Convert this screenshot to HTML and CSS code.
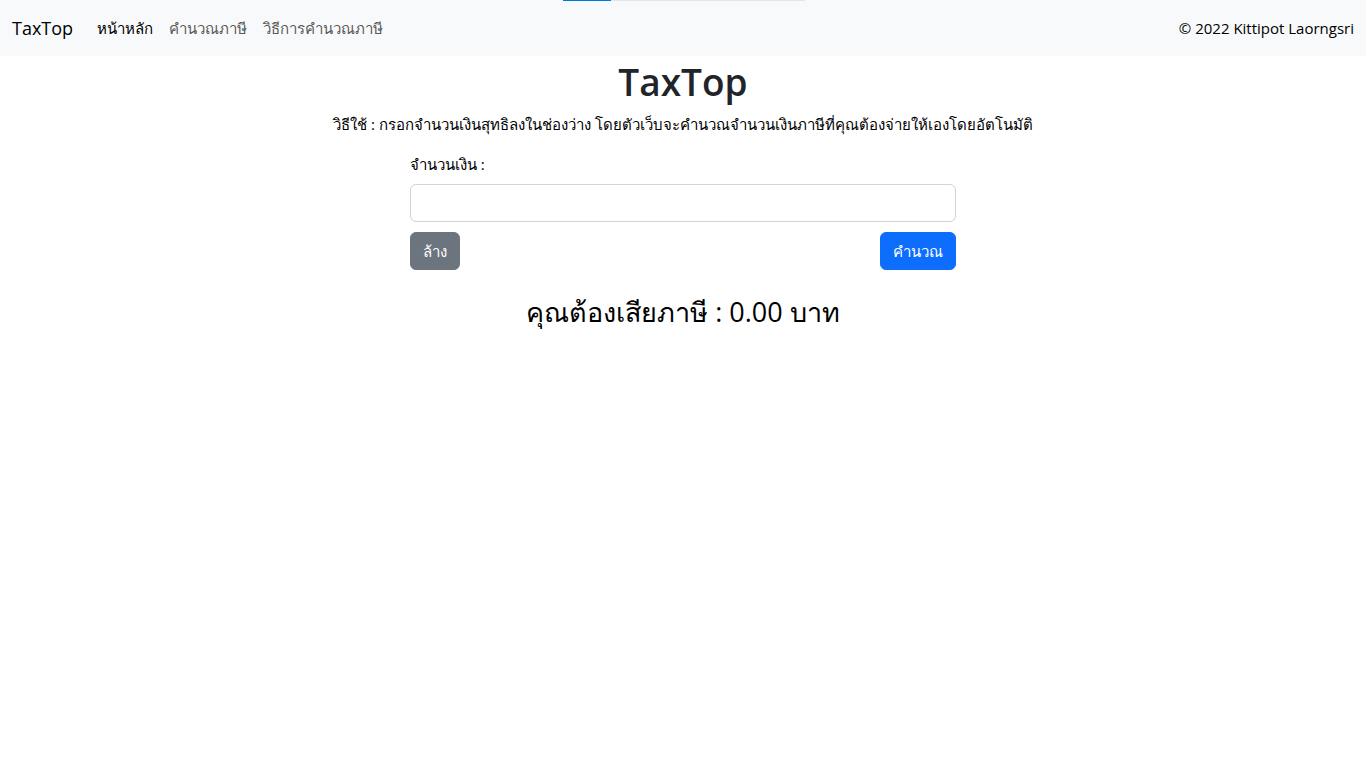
FILE: index.html
```html
<!DOCTYPE html>
<html lang="th">
<head>
<meta charset="utf-8">
<meta name="viewport" content="width=device-width, initial-scale=1">
<title>TaxTop</title>
<link rel="stylesheet" href="styles.css">
</head>
<body>
<div class="progress"><div class="progress-value"></div></div>
<nav class="navbar">
  <a class="brand" href="#">TaxTop</a>
  <ul class="nav-list">
    <li><a class="nav-link active" href="#">หน้าหลัก</a></li>
    <li><a class="nav-link" href="#">คำนวณภาษี</a></li>
    <li><a class="nav-link" href="#">วิธีการคำนวณภาษี</a></li>
  </ul>
  <span class="copyright">© 2022 Kittipot Laorngsri</span>
</nav>
<main class="page">
  <h1 class="title">TaxTop</h1>
  <p class="usage">วิธีใช้ : กรอกจำนวนเงินสุทธิลงในช่องว่าง โดยตัวเว็บจะคำนวณจำนวนเงินภาษีที่คุณต้องจ่ายให้เองโดยอัตโนมัติ</p>
  <form class="tax-form">
    <label class="label" for="amount">จำนวนเงิน :</label>
    <input class="amount" id="amount" type="text">
    <div class="actions">
      <button class="btn btn-secondary" type="reset">ล้าง</button>
      <button class="btn btn-primary" type="button">คำนวณ</button>
    </div>
  </form>
  <h3 class="result">คุณต้องเสียภาษี : 0.00 บาท</h3>
</main>
</body>
</html>
```
FILE: styles.css
```css
*, *::before, *::after { box-sizing: border-box; }
body {
  margin: 0;
  font-family: "Segoe UI", "Open Sans", "Noto Sans", sans-serif;
  font-size: 15px;
  line-height: 24px;
  color: #212529;
  background: #fff;
}
.progress {
  position: absolute;
  top: 0;
  left: 50%;
  width: 242px;
  height: 1px;
  margin-left: -120px;
  background: #e5e5e5;
}
.progress-value { width: 20%; height: 1px; background: #0078d4; }
.navbar {
  display: flex;
  align-items: center;
  min-height: 56px;
  padding: 8px 12px;
  background: #f8f9fa;
}
.brand { margin-right: 16px; font-size: 18px; color: #000; text-decoration: none; }
.nav-list { display: flex; flex: 1; margin: 0; padding: 0; list-style: none; }
.nav-link { display: block; padding: 8px; color: #595959; text-decoration: none; }
.nav-link.active, .copyright { color: #000; }
.title { margin: 0 0 6px; padding-top: 2px; font-size: 37px; font-weight: 600; line-height: 48px; text-align: center; }
.usage { margin: 0 0 16px; text-align: center; color: #000; }
.tax-form { width: 40%; margin: 0 auto; }
.label { display: block; margin-bottom: 8px; color: #000; }
.amount {
  display: block;
  width: 100%;
  height: 38px;
  padding: 6px 12px;
  border: 1px solid #ced4da;
  border-radius: 6px;
  font: inherit;
}
.actions { display: flex; justify-content: space-between; margin-top: 10px; }
.btn { height: 38px; padding: 6px 12px; border: 1px solid; border-radius: 6px; font: inherit; font-weight: 500; color: #fff; }
.btn-secondary { background: #6c757d; border-color: #6c757d; }
.btn-primary { background: #0d6efd; border-color: #0d6efd; }
.result { margin: 26px 0 8px; font-size: 27px; font-weight: 500; line-height: 32px; text-align: center; color: #000; }
```
